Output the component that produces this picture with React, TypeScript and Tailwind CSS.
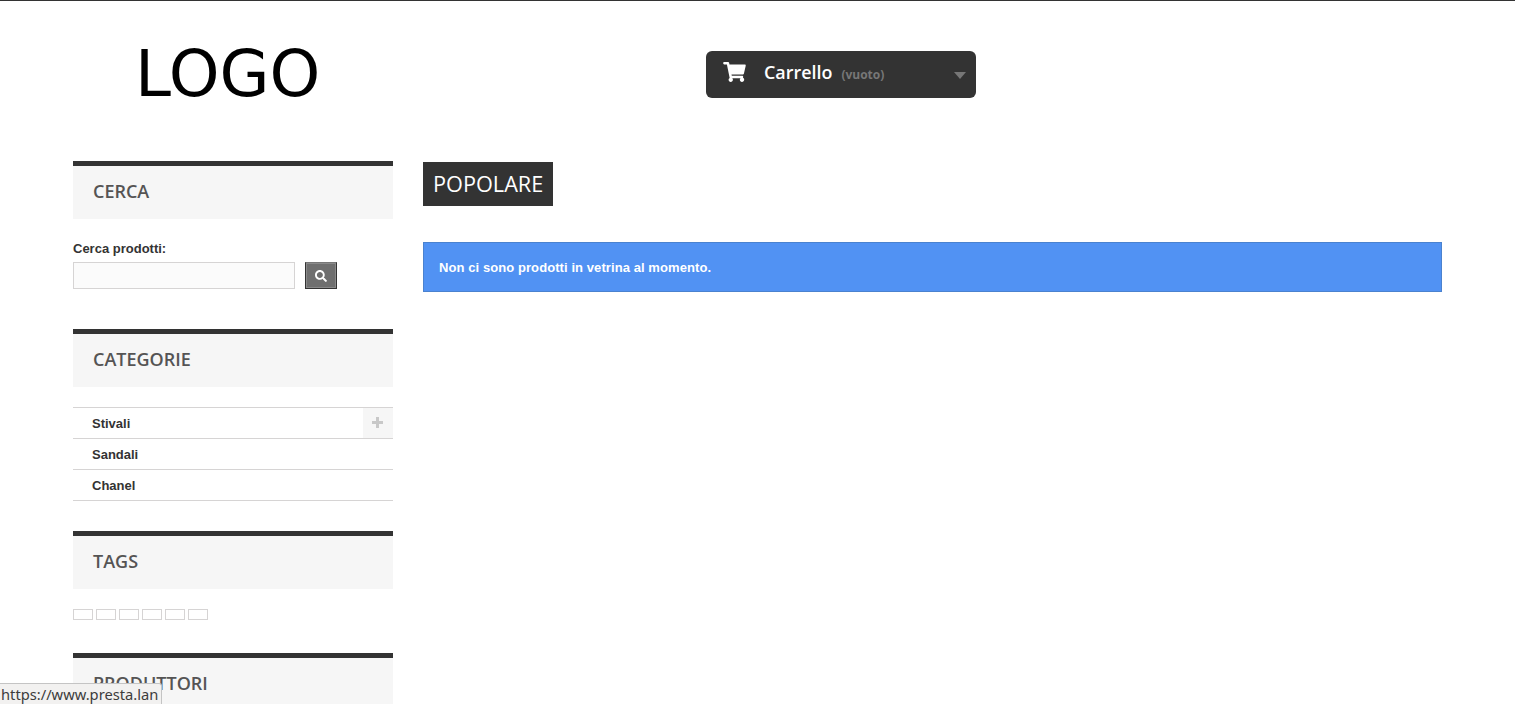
import { FaSearch, FaShoppingCart } from "react-icons/fa"
import type { ReactNode } from "react"

const categories = ["Stivali", "Sandali", "Chanel"]
const tags = [0, 1, 2, 3, 4, 5]

function SideBlock({ title, className, children }: { title: string; className: string; children?: ReactNode }) {
  return (
    <section className={className}>
      <h4 className="h-[58px] border-t-[5px] border-[#333333] bg-[#f6f6f6] pl-5 font-['Open_Sans',sans-serif] text-[18px] leading-[51px] font-semibold text-[#555454]">
        {title}
      </h4>
      {children}
    </section>
  )
}

export default function App() {
  return (
    <div className="relative h-[704px] overflow-hidden border-t border-[#333333] bg-white font-['Liberation_Sans',Arial,sans-serif]">
      <div className="mx-auto w-[1369px]">
        {/* header */}
        <header className="flex h-[160px]">
          <div className="w-[633px] pt-[31px] pl-[62px] font-['DejaVu_Sans',sans-serif] text-[64.6px] leading-[84px] text-black">
            LOGO
          </div>
          <div className="mt-[50px] flex h-[47px] w-[270px] items-center rounded-[6px] bg-[#333333] pr-[10px] pl-[17px] font-['Open_Sans',sans-serif] text-white">
            <FaShoppingCart className="mb-[6px] h-[20px] w-[23px]" />
            <span className="mb-[5px] ml-[18px] text-[17.9px] font-semibold">Carrello</span>
            <span className="ml-[9px] text-[12px] font-bold text-[#777777]">(vuoto)</span>
            <span className="mt-[2px] ml-auto h-0 w-0 border-x-[6px] border-t-[7px] border-x-transparent border-t-[#777777]" />
          </div>
        </header>

        <div className="flex gap-[30px]">
          {/* left column */}
          <aside className="w-[320px]">
            <SideBlock title="CERCA" className="h-[168px]">
              <label className="mt-[22px] block text-[13px] leading-[16px] font-bold text-[#333333]">Cerca prodotti:</label>
              <div className="mt-[5px] flex items-start">
                <input className="h-[27px] w-[222px] border border-[#d6d4d4] bg-[#fbfbfb]" />
                <button className="mt-0 ml-[10px] flex h-[27px] w-[32px] items-center justify-center border border-[#333333] border-t-[#777777] bg-[#6f6f6f] text-white shadow-[inset_0_0_0_1px_#8a8a8a]">
                  <FaSearch className="h-3 w-3" />
                </button>
              </div>
            </SideBlock>

            <SideBlock title="CATEGORIE" className="h-[202px]">
              <ul className="mt-5 border-t border-[#d6d4d4]">
                {categories.map((name, i) => (
                  <li key={name} className="relative h-[31px] border-b border-[#d6d4d4] pl-[19px] text-[13px] leading-[31px] font-bold text-[#333333]">
                    {name}
                    {i === 0 && (
                      <span className="absolute top-0 right-0 flex h-[30px] w-[30px] items-center justify-center bg-[#f6f6f6]">
                        <span className="relative mr-[1px] mb-[2px] h-[11px] w-[11px]">
                          <span className="absolute top-[4px] left-0 h-[3px] w-[11px] bg-[#c8c8c8]" />
                          <span className="absolute top-0 left-[4px] h-[11px] w-[3px] bg-[#c8c8c8]" />
                        </span>
                      </span>
                    )}
                  </li>
                ))}
              </ul>
            </SideBlock>

            <SideBlock title="TAGS" className="h-[122px]">
              <div className="mt-5 flex gap-[3px]">
                {tags.map((t) => (
                  <span key={t} className="h-[11px] w-5 border border-[#d6d4d4]" />
                ))}
              </div>
            </SideBlock>

            <SideBlock title="PRODUTTORI" className="h-[58px]" />
          </aside>

          {/* center column */}
          <main className="w-[1019px] pt-px">
            <h2 className="inline-block h-[44px] bg-[#333333] px-[10px] font-['Open_Sans',sans-serif] text-[21.7px] leading-[44px] font-medium text-white">
              POPOLARE
            </h2>
            <p className="mt-[36px] h-[50px] border border-[#4a82cf] bg-[#5192f3] pl-[15px] text-[13px] leading-[49px] font-bold tracking-[0.08px] text-white">
              Non ci sono prodotti in vetrina al momento.
            </p>
          </main>
        </div>
      </div>

      {/* browser status bubble */}
      <div className="absolute bottom-0 left-0 h-[21px] rounded-tr-[3px] border-t border-r border-[#c4c4c4] bg-[#f2f1f0] pr-[3px] pl-[1px] font-['Noto_Sans',sans-serif] text-[14.7px] leading-[20px] text-[#3c3c3c]">
        https://www.presta.lan
      </div>
    </div>
  )
}
